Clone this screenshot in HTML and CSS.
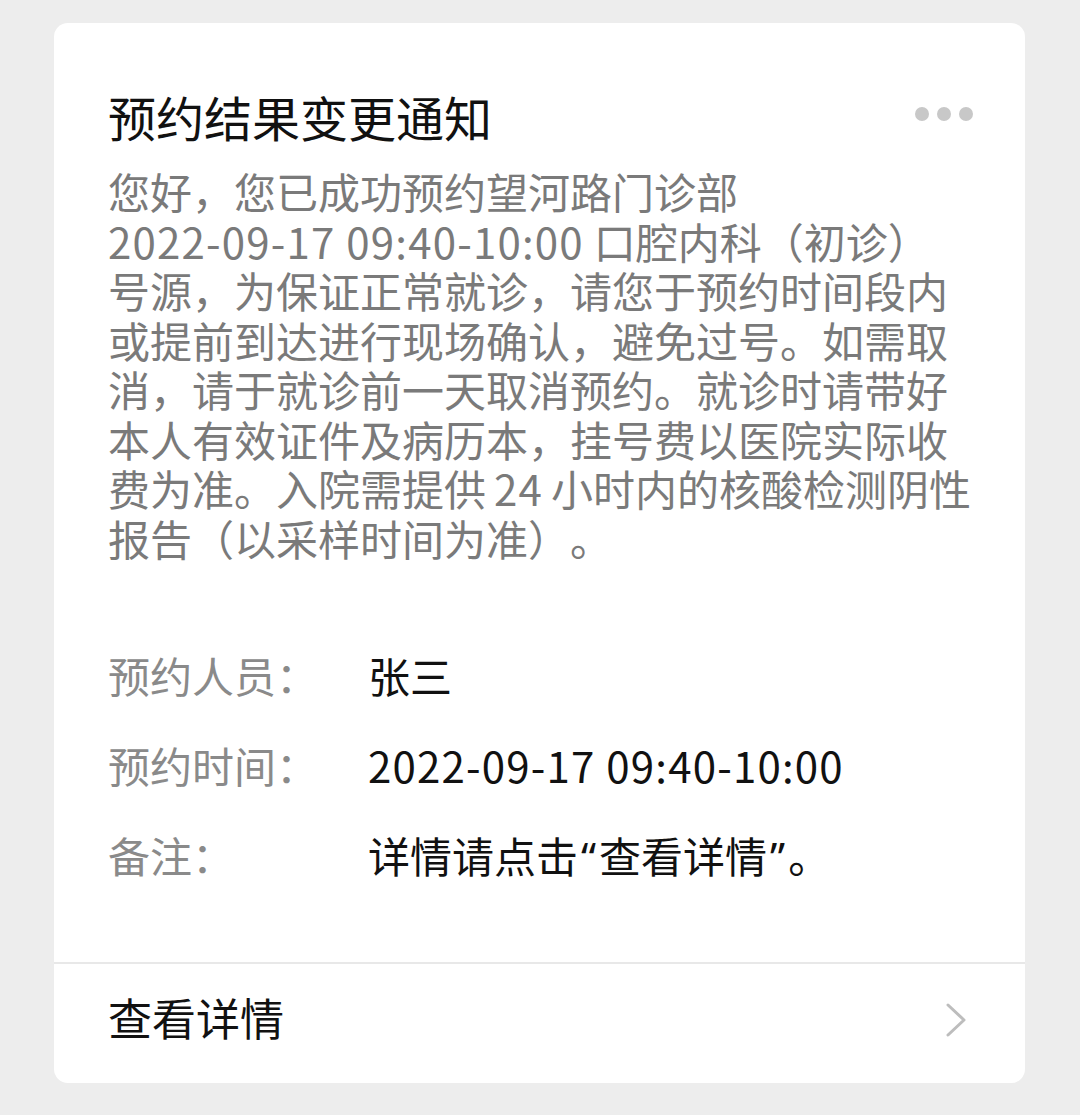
FILE: index.html
```html
<!DOCTYPE html>
<html lang="zh-CN">
<head>
    <meta charset="UTF-8">
    <meta name="viewport" content="width=device-width, initial-scale=1.0">
    <title>预约结果变更通知</title>
    <link rel="stylesheet" href="styles.css">
</head>
<body>
    <div class="card">
        <div class="card-header">
            <h1>预约结果变更通知</h1>
            <div class="more">
                <span></span><span></span><span></span>
            </div>
        </div>
        <p class="notice">
            您好，您已成功预约望河路门诊部<br>
            <span class="num num-end">2022-09-17 09:40-10:00</span>口腔内科（初诊）<br>
            号源，为保证正常就诊，请您于预约时间段内<br>
            或提前到达进行现场确认，避免过号。如需取<br>
            消，请于就诊前一天取消预约。就诊时请带好<br>
            本人有效证件及病历本，挂号费以医院实际收<br>
            费为准。入院需提供<span class="num num-mid">24</span>小时内的核酸检测阴性<br>
            报告（以采样时间为准）。
        </p>
        <div class="fields">
            <div class="field">
                <div class="label">预约人员：</div>
                <div class="value">张三</div>
            </div>
            <div class="field">
                <div class="label">预约时间：</div>
                <div class="value"><span class="num">2022-09-17 09:40-10:00</span></div>
            </div>
            <div class="field">
                <div class="label">备注：</div>
                <div class="value">详情请点击<span class="quote">“</span>查看详情<span class="quote">”</span>。</div>
            </div>
        </div>
        <div class="card-footer">
            <span>查看详情</span>
            <svg class="arrow" width="24" height="36" viewBox="0 0 24 36">
                <path d="M4 3 L20 18 L4 33" fill="none" stroke="#bdbdbd" stroke-width="3" stroke-linecap="round" stroke-linejoin="round"/>
            </svg>
        </div>
    </div>
</body>
</html>
```

FILE: styles.css
```css
body {
    background-color: #ededed;
    margin: 0;
    padding: 23px 55px 0 54px;
    font-family: "Noto Sans CJK SC", "Noto Sans", sans-serif;
    color: #111;
    text-spacing-trim: space-all;
}
.card {
    background-color: #fff;
    border-radius: 14px;
    height: 1060px;
    box-sizing: border-box;
    padding-top: 62px;
    display: flex;
    flex-direction: column;
}
.card-header {
    display: flex;
    justify-content: space-between;
    align-items: flex-start;
    padding: 0 52px 0 54px;
}
.card-header h1 {
    margin: 0;
    font-size: 48px;
    font-weight: 400;
    line-height: 62px;
    color: #111;
}
.more {
    display: flex;
    gap: 8px;
    margin-top: 22px;
}
.more span {
    width: 14px;
    height: 14px;
    border-radius: 50%;
    background-color: #c8c8c8;
}
.notice {
    margin: 19px 0 0;
    padding: 0 54px;
    font-size: 42px;
    line-height: 49.5px;
    color: #7a7a7a;
    white-space: nowrap;
}
.num {
    letter-spacing: 1.2px;
}
.num-end {
    margin-right: 10px;
}
.num-mid {
    margin: 0 8px;
}
.quote {
    font-family: "Noto Sans", sans-serif;
    margin: 0 3px;
}
.fields {
    margin-top: 67px;
    padding: 0 54px;
}
.field {
    display: flex;
    align-items: center;
    height: 90px;
    font-size: 42px;
}
.field .label {
    width: 260px;
    color: #8a8a8a;
}
.field .value {
    color: #111;
}
.card-footer {
    margin-top: auto;
    border-top: 2px solid #e8e8e8;
    padding: 24px 57px 37px 54px;
    display: flex;
    justify-content: space-between;
    align-items: center;
    font-size: 44px;
    line-height: 58px;
}
.arrow {
    margin-top: 6px;
}
```
